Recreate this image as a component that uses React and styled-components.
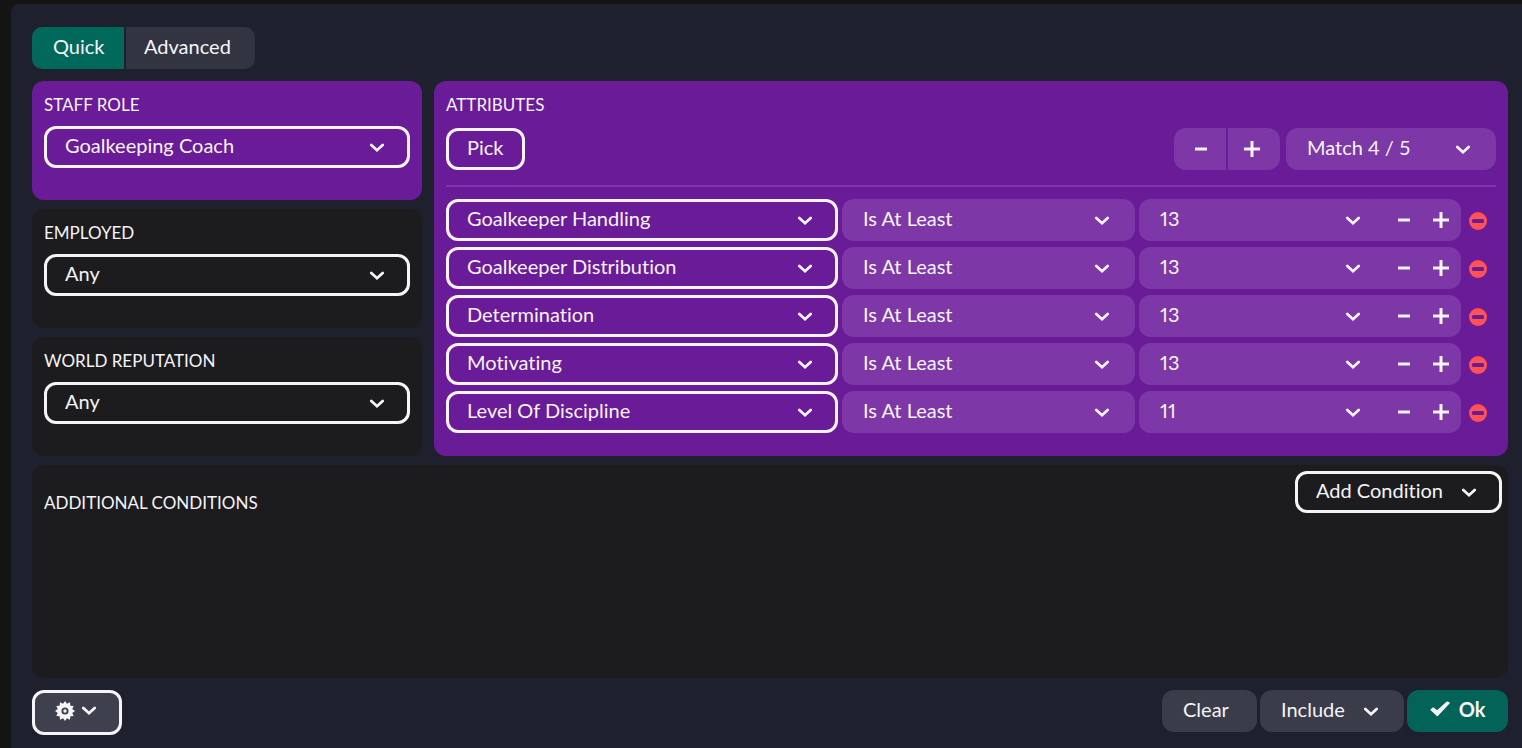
import React, { useState } from 'react';
import styled, { createGlobalStyle, css } from 'styled-components';

const colors = {
  page: '#141415',
  dialog: '#1e202e',
  card: '#1c1c1e',
  purple: '#6a1b98',
  purpleLight: '#7d37a6',
  green: '#00695c',
  greenDark: '#046358',
  grey: '#323541',
  greyLight: '#3a3c4a',
  settings: '#3e414d',
  text: '#f5f4f7',
  red: '#ff5252',
};

const GlobalStyle = createGlobalStyle`
  * {
    box-sizing: border-box;
  }

  body {
    margin: 0;
    background-color: ${colors.page};
    color: ${colors.text};
    font-family: Lato, 'Liberation Sans', sans-serif;
    font-size: 20px;
    font-variant-ligatures: none;
  }
`;

const variants = {
  outline: css`
    background-color: transparent;
    border-color: ${colors.text};
  `,
  purple: css`
    background-color: ${colors.purpleLight};
  `,
  grey: css`
    background-color: ${colors.greyLight};
  `,
  green: css`
    background-color: ${colors.greenDark};
    font-weight: bold;
  `,
  settings: css`
    background-color: ${colors.settings};
    border-color: ${colors.text};
  `,
};

const controlStyle = css`
  border: 3px solid transparent;
  border-radius: 12px;
  color: ${colors.text};
  font: inherit;
  font-variant-ligatures: none;
  line-height: 24px;
  margin: 0;
  padding: 4px 18px 8px;
  white-space: nowrap;
  ${({ variant }) => variants[variant]}
`;

const Page = styled.div`
  display: flex;
  min-height: 100vh;
  padding: 4px 0 0 11px;
`;

const Dialog = styled.main`
  background-color: ${colors.dialog};
  border-top-left-radius: 8px;
  display: flex;
  flex: 1;
  flex-direction: column;
  padding: 23px 14px 13px 21px;
`;

const Tabs = styled.div`
  display: flex;
  gap: 2px;
  margin-bottom: 12px;
`;

const Tab = styled.button`
  background-color: ${({ active }) => (active ? colors.green : colors.grey)};
  border: 0;
  color: ${colors.text};
  font: inherit;
  line-height: 24px;
  min-width: ${({ width }) => width}px;
  padding: 7px 18px 11px;
  text-align: left;

  &:first-child {
    border-radius: 10px 0 0 10px;
    padding-left: 21px;
  }

  &:last-child {
    border-radius: 0 10px 10px 0;
  }
`;

const Filters = styled.div`
  display: grid;
  gap: 12px;
  grid-template-columns: 390fr 1074fr;
  margin-bottom: 9px;
`;

const Column = styled.div`
  display: flex;
  flex-direction: column;
  gap: 9px;
`;

const Card = styled.section`
  background-color: ${({ highlighted }) => (highlighted ? colors.purple : colors.card)};
  border-radius: 12px;
  padding: 12px;
`;

const FilterCard = styled(Card)`
  display: flex;
  flex-direction: column;
  gap: 9px;
  padding-bottom: 32px;
`;

const labelStyle = css`
  font-size: 17px;
  font-weight: normal;
  line-height: 24px;
  margin: 0;
`;

const Label = styled.label`
  ${labelStyle}
`;

const Title = styled.h2`
  ${labelStyle}
`;

const SelectBox = styled.div`
  align-items: center;
  display: grid;
  min-width: ${({ width }) => (width ? `${width}px` : 0)};

  > * {
    grid-area: 1 / 1;
  }
`;

const NativeSelect = styled.select`
  ${controlStyle}
  appearance: none;
  width: 100%;

  option {
    background-color: ${colors.card};
  }
`;

const NumberSelect = styled(NativeSelect)`
  font-variant-numeric: proportional-nums;
`;

const SelectArrow = styled.span`
  display: flex;
  justify-self: end;
  margin-right: 25px;
  padding-top: 2px;
  pointer-events: none;
`;

const Button = styled.button`
  ${controlStyle}
  align-items: center;
  display: flex;
  gap: 6px;
  min-width: ${({ width }) => width}px;
`;

const OkButton = styled(Button)`
  gap: 9px;
  justify-content: center;
`;

const Toolbar = styled.div`
  align-items: center;
  border-bottom: 2px solid ${colors.purpleLight};
  display: flex;
  gap: 6px;
  margin: 11px 0 12px;
  padding-bottom: 15px;
`;

const Stepper = styled.div`
  display: flex;
  gap: 2px;
  margin-left: auto;
`;

const StepButton = styled.button`
  align-items: center;
  background-color: ${colors.purpleLight};
  border: 0;
  color: ${colors.text};
  display: flex;
  height: 42px;
  justify-content: center;
  padding: 0;
  width: 52px;

  &:first-child {
    border-radius: 12px 0 0 12px;
    padding-left: 2px;
  }

  &:last-child {
    border-radius: 0 12px 12px 0;
    padding-right: 4px;
  }
`;

const Rows = styled.div`
  display: flex;
  flex-direction: column;
  gap: 6px;
`;

const Row = styled.div`
  display: flex;
`;

const RowFields = styled.div`
  display: grid;
  flex: 1;
  gap: 4px;
  grid-template-columns: 392fr 293fr 322fr;
`;

const ValueField = styled.div`
  background-color: ${colors.purpleLight};
  border-radius: 12px;
  display: flex;
  padding-right: 2px;

  ${SelectBox} {
    flex: 1;
  }

  ${SelectArrow} {
    margin-right: 24px;
  }
`;

const ValueButton = styled.button`
  align-items: center;
  background: none;
  border: 0;
  color: ${colors.text};
  display: flex;
  justify-content: center;
  padding: 0;
  width: 37px;
`;

const RemoveButton = styled(ValueButton)`
  padding: 2px 2px 0 0;
  width: 35px;
`;

const Conditions = styled(Card)`
  align-items: flex-start;
  display: flex;
  flex: 1;
  justify-content: space-between;
  padding: 6px 6px 6px 12px;
`;

const ConditionsTitle = styled(Title)`
  padding-top: 20px;
`;

const Footer = styled.footer`
  align-items: flex-start;
  display: flex;
  gap: 3px;
  margin-top: 12px;
`;

const SettingsButton = styled(Button)`
  margin-right: auto;
  padding: 8px 20px 11px;
`;

const Chevron = () => (
  <svg width="16" height="10" viewBox="0 0 16 10" fill="none" aria-hidden="true">
    <path
      d="M2.300 2L8 7.200L13.700 2"
      stroke="currentColor"
      strokeWidth="2.800"
      strokeLinecap="round"
    />
  </svg>
);

const Minus = () => (
  <svg width="16" height="16" viewBox="0 0 16 16" aria-hidden="true">
    <path d="M2 6.5h12v3H2z" fill="currentColor" />
  </svg>
);

const Plus = () => (
  <svg width="16" height="16" viewBox="0 0 16 16" aria-hidden="true">
    <path d="M6.5 0h3v6.5H16v3H9.5V16h-3V9.5H0v-3h6.5z" fill="currentColor" />
  </svg>
);

const Remove = () => (
  <svg width="18" height="18" viewBox="0 0 18 18" aria-hidden="true">
    <circle cx="9" cy="9" r="9" fill={colors.red} />
    <rect x="3" y="7" width="12" height="4" rx="1.5" fill={colors.purple} />
  </svg>
);

const Check = () => (
  <svg width="20" height="16" viewBox="0 0 20 16" aria-hidden="true">
    <path
      d="M1.200 8.800L3.200 7.200L7 10.200L17 1.200L19 2L7.300 14.500z"
      fill="currentColor"
      stroke="currentColor"
      strokeWidth="1.500"
      strokeLinejoin="round"
    />
  </svg>
);

// twelve pointed teeth around a ring
const teeth = Array.from({ length: 24 }, (_, i) => {
  const radius = i % 2 ? 7.5 : 10;
  const angle = (i * Math.PI) / 12;
  return `${10 + radius * Math.sin(angle)},${10 - radius * Math.cos(angle)}`;
}).join(' ');

const Gear = () => (
  <svg width="20" height="20" viewBox="0 0 20 20" aria-hidden="true">
    <polygon points={teeth} fill="currentColor" />
    <circle cx="10" cy="10" r="2.600" fill="none" stroke={colors.settings} strokeWidth="1.900" />
  </svg>
);

const Select = ({ as: Control = NativeSelect, options, variant, width, ...props }) => (
  <SelectBox width={width}>
    <Control variant={variant} {...props}>
      {options.map(option => (
        <option key={option}>{option}</option>
      ))}
    </Control>
    <SelectArrow>
      <Chevron />
    </SelectArrow>
  </SelectBox>
);

const filters = [
  { id: 'role', label: 'STAFF ROLE', value: 'Goalkeeping Coach', highlighted: true },
  { id: 'employed', label: 'EMPLOYED', value: 'Any' },
  { id: 'reputation', label: 'WORLD REPUTATION', value: 'Any' },
];

const initialAttributes = [
  { name: 'Goalkeeper Handling', value: 13 },
  { name: 'Goalkeeper Distribution', value: 13 },
  { name: 'Determination', value: 13 },
  { name: 'Motivating', value: 13 },
  { name: 'Level Of Discipline', value: 11 },
];

const values = Array.from({ length: 20 }, (_, i) => i + 1);

const AttributeRow = ({ attribute, onChange, onRemove }) => {
  const step = amount => onChange(Math.min(20, Math.max(1, attribute.value + amount)));

  return (
    <Row>
      <RowFields>
        <Select variant="outline" aria-label="Attribute" options={[attribute.name]} />
        <Select variant="purple" aria-label="Comparison" options={['Is At Least']} />
        <ValueField>
          <Select
            as={NumberSelect}
            aria-label="Value"
            options={values}
            value={attribute.value}
            onChange={e => onChange(Number(e.target.value))}
            variant="purple"
          />
          <ValueButton aria-label="Decrease" onClick={() => step(-1)}>
            <Minus />
          </ValueButton>
          <ValueButton aria-label="Increase" onClick={() => step(1)}>
            <Plus />
          </ValueButton>
        </ValueField>
      </RowFields>
      <RemoveButton aria-label="Remove" onClick={onRemove}>
        <Remove />
      </RemoveButton>
    </Row>
  );
};

export default function App() {
  const [tab, setTab] = useState('Quick');
  const [attributes, setAttributes] = useState(initialAttributes);

  const changeValue = (name, value) =>
    setAttributes(attributes.map(item => (item.name === name ? { ...item, value } : item)));

  const removeAttribute = name =>
    setAttributes(attributes.filter(item => item.name !== name));

  return (
    <Page>
      <GlobalStyle />
      <Dialog>
        <Tabs>
          <Tab width={92} active={tab === 'Quick'} onClick={() => setTab('Quick')}>Quick</Tab>
          <Tab width={129} active={tab === 'Advanced'} onClick={() => setTab('Advanced')}>Advanced</Tab>
        </Tabs>
        <Filters>
          <Column>
            {filters.map(({ id, label, value, highlighted }) => (
              <FilterCard key={id} highlighted={highlighted}>
                <Label htmlFor={id}>{label}</Label>
                <Select id={id} variant="outline" options={[value]} />
              </FilterCard>
            ))}
          </Column>
          <Card highlighted>
            <Title>ATTRIBUTES</Title>
            <Toolbar>
              <Button variant="outline" width={79}>Pick</Button>
              <Stepper>
                <StepButton aria-label="Match fewer"><Minus /></StepButton>
                <StepButton aria-label="Match more"><Plus /></StepButton>
              </Stepper>
              <Select variant="purple" width={210} aria-label="Match" options={['Match 4 / 5']} />
            </Toolbar>
            <Rows>
              {attributes.map(attribute => (
                <AttributeRow
                  key={attribute.name}
                  attribute={attribute}
                  onChange={value => changeValue(attribute.name, value)}
                  onRemove={() => removeAttribute(attribute.name)}
                />
              ))}
            </Rows>
          </Card>
        </Filters>
        <Conditions>
          <ConditionsTitle>ADDITIONAL CONDITIONS</ConditionsTitle>
          <Select variant="outline" width={207} aria-label="Add condition" options={['Add Condition']} />
        </Conditions>
        <Footer>
          <SettingsButton variant="settings" width={90} aria-label="Settings">
            <Gear />
            <Chevron />
          </SettingsButton>
          <Button variant="grey" width={95}>Clear</Button>
          <Select variant="grey" width={144} aria-label="Include" options={['Include']} />
          <OkButton variant="green" width={101}>
            <Check />
            Ok
          </OkButton>
        </Footer>
      </Dialog>
    </Page>
  );
}
